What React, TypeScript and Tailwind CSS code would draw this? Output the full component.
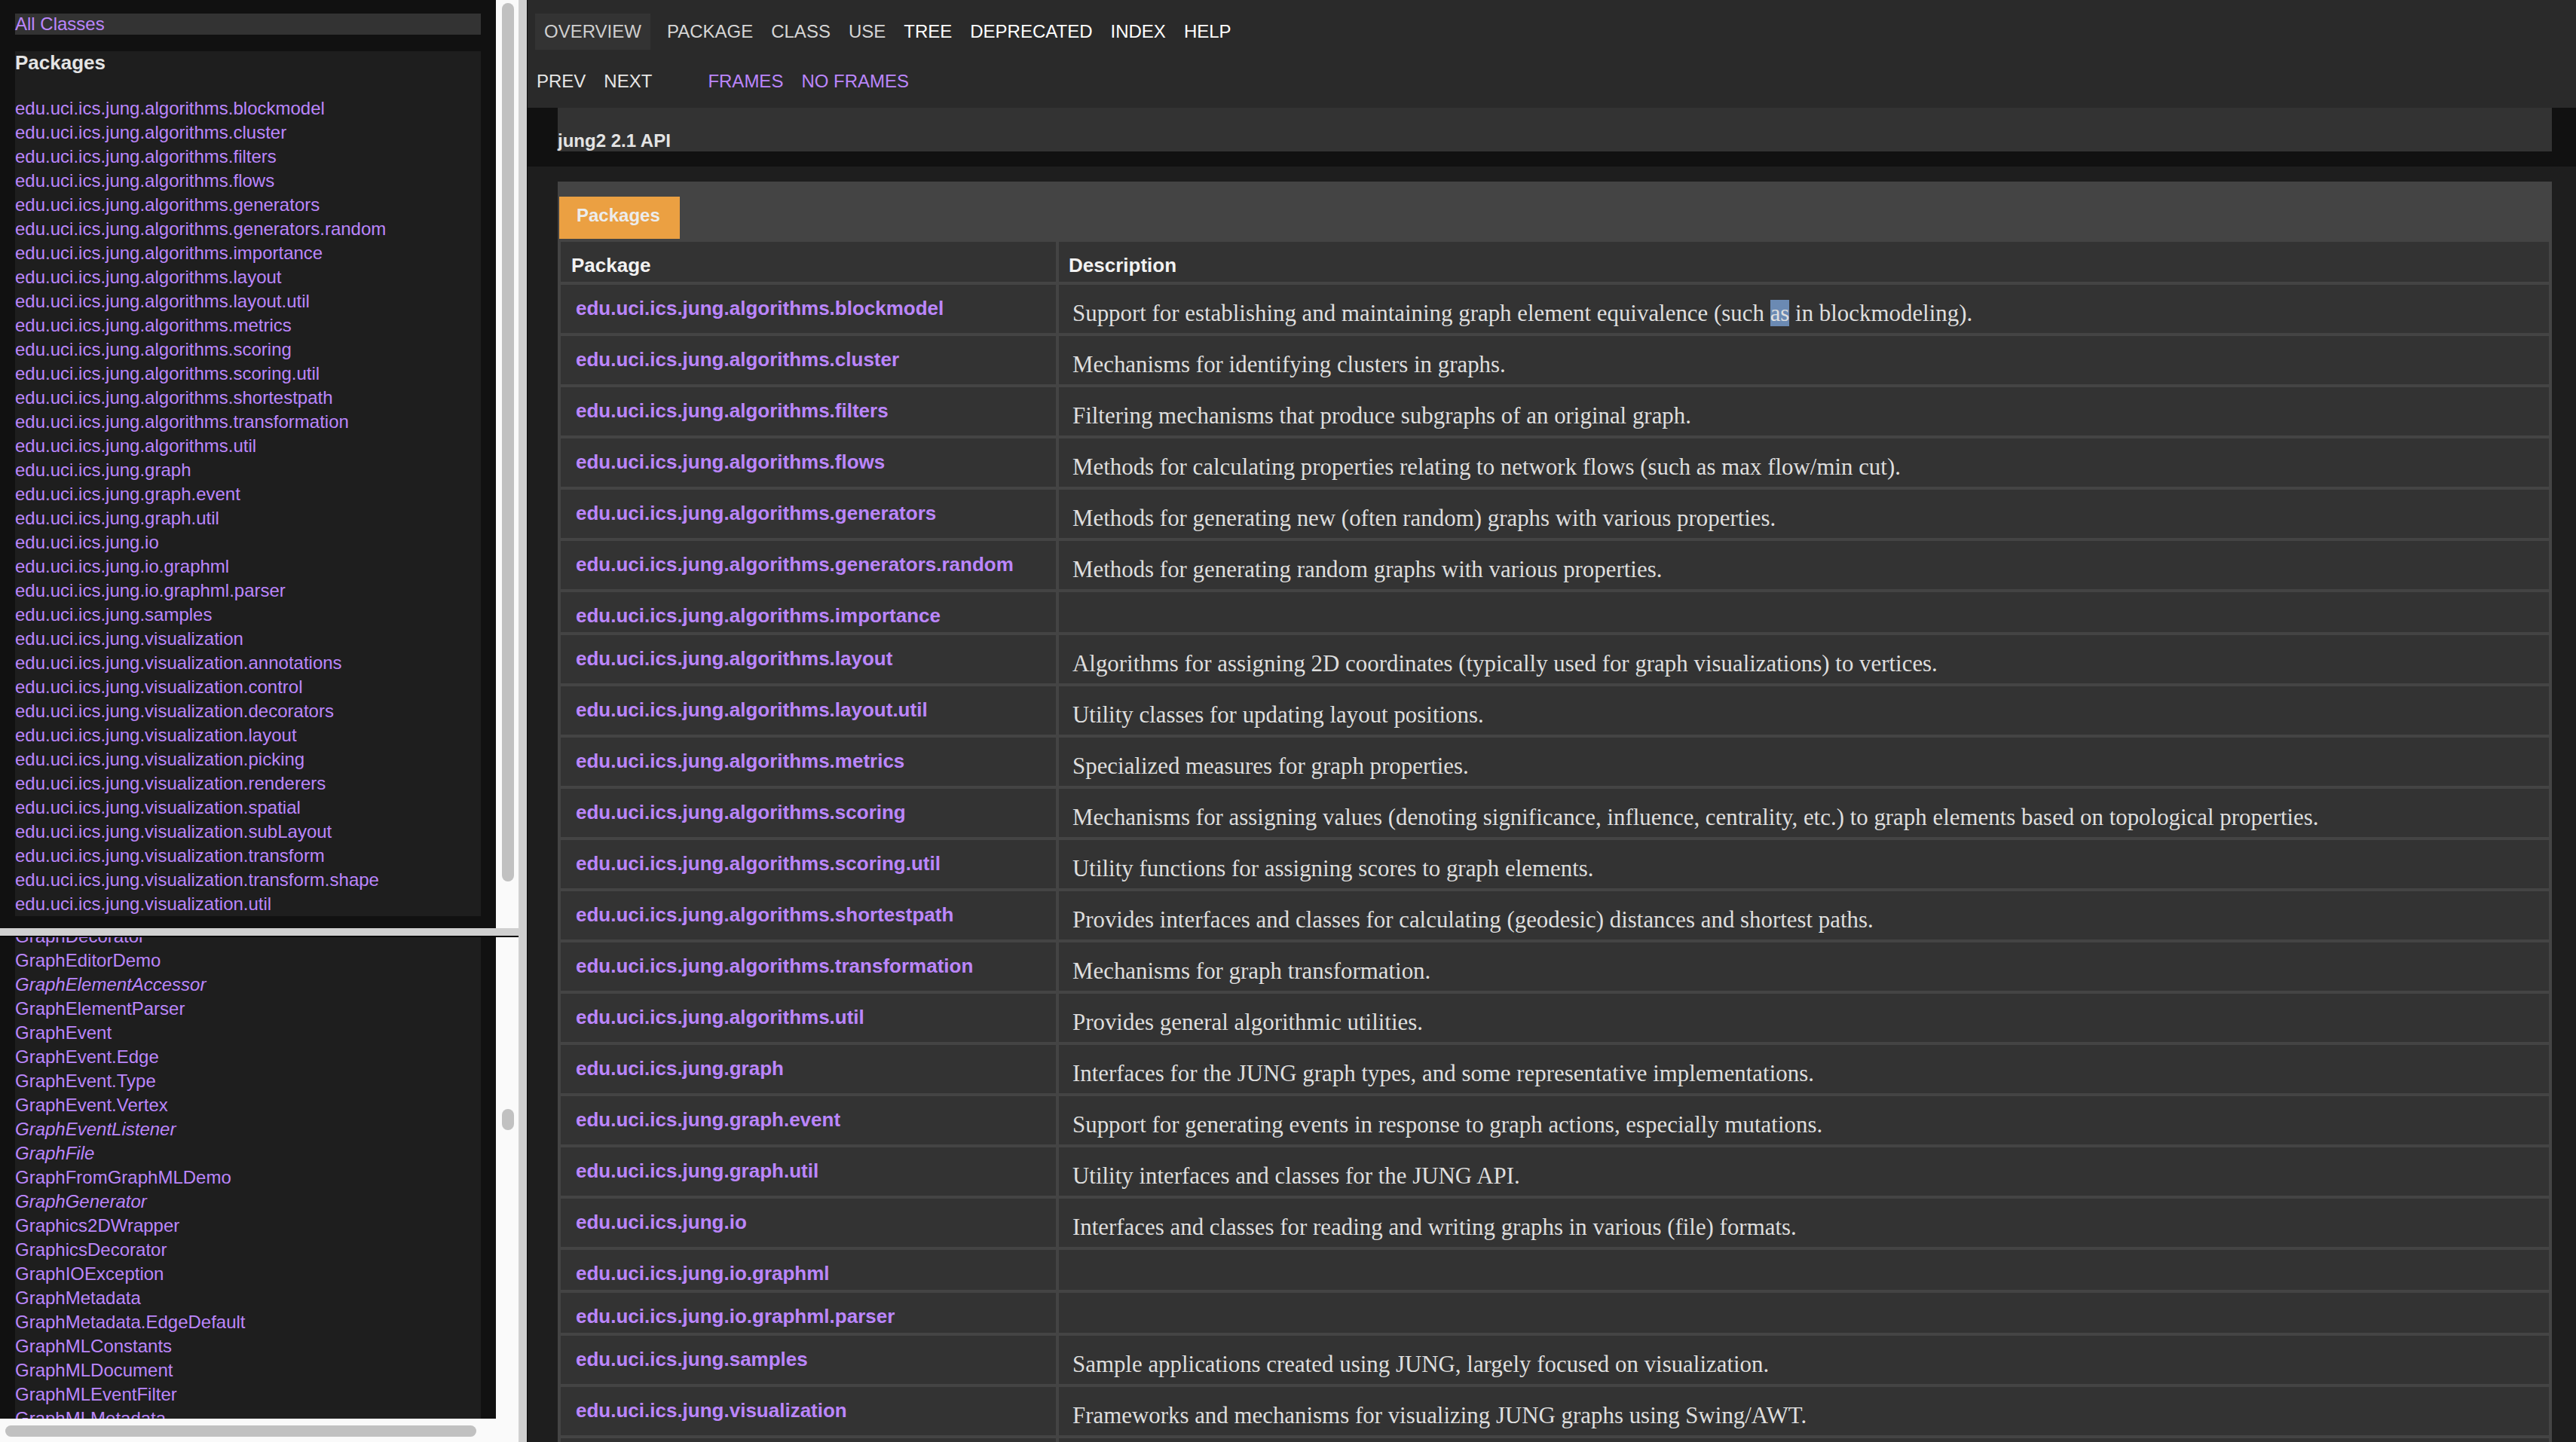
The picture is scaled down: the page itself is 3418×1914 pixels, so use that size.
import React from "react";

const packages = [
  "edu.uci.ics.jung.algorithms.blockmodel",
  "edu.uci.ics.jung.algorithms.cluster",
  "edu.uci.ics.jung.algorithms.filters",
  "edu.uci.ics.jung.algorithms.flows",
  "edu.uci.ics.jung.algorithms.generators",
  "edu.uci.ics.jung.algorithms.generators.random",
  "edu.uci.ics.jung.algorithms.importance",
  "edu.uci.ics.jung.algorithms.layout",
  "edu.uci.ics.jung.algorithms.layout.util",
  "edu.uci.ics.jung.algorithms.metrics",
  "edu.uci.ics.jung.algorithms.scoring",
  "edu.uci.ics.jung.algorithms.scoring.util",
  "edu.uci.ics.jung.algorithms.shortestpath",
  "edu.uci.ics.jung.algorithms.transformation",
  "edu.uci.ics.jung.algorithms.util",
  "edu.uci.ics.jung.graph",
  "edu.uci.ics.jung.graph.event",
  "edu.uci.ics.jung.graph.util",
  "edu.uci.ics.jung.io",
  "edu.uci.ics.jung.io.graphml",
  "edu.uci.ics.jung.io.graphml.parser",
  "edu.uci.ics.jung.samples",
  "edu.uci.ics.jung.visualization",
  "edu.uci.ics.jung.visualization.annotations",
  "edu.uci.ics.jung.visualization.control",
  "edu.uci.ics.jung.visualization.decorators",
  "edu.uci.ics.jung.visualization.layout",
  "edu.uci.ics.jung.visualization.picking",
  "edu.uci.ics.jung.visualization.renderers",
  "edu.uci.ics.jung.visualization.spatial",
  "edu.uci.ics.jung.visualization.subLayout",
  "edu.uci.ics.jung.visualization.transform",
  "edu.uci.ics.jung.visualization.transform.shape",
  "edu.uci.ics.jung.visualization.util",
];

// [name, isInterface]
const classes: [string, boolean][] = [
  ["GraphDecorator", false],
  ["GraphEditorDemo", false],
  ["GraphElementAccessor", true],
  ["GraphElementParser", false],
  ["GraphEvent", false],
  ["GraphEvent.Edge", false],
  ["GraphEvent.Type", false],
  ["GraphEvent.Vertex", false],
  ["GraphEventListener", true],
  ["GraphFile", true],
  ["GraphFromGraphMLDemo", false],
  ["GraphGenerator", true],
  ["Graphics2DWrapper", false],
  ["GraphicsDecorator", false],
  ["GraphIOException", false],
  ["GraphMetadata", false],
  ["GraphMetadata.EdgeDefault", false],
  ["GraphMLConstants", false],
  ["GraphMLDocument", false],
  ["GraphMLEventFilter", false],
  ["GraphMLMetadata", false],
];

const rows: { name: string; desc?: React.ReactNode }[] = [
  {
    name: "edu.uci.ics.jung.algorithms.blockmodel",
    desc: (
      <>
        Support for establishing and maintaining graph element equivalence (such{" "}
        <span className="bg-[#6b8ab3]">as</span> in blockmodeling).
      </>
    ),
  },
  { name: "edu.uci.ics.jung.algorithms.cluster", desc: "Mechanisms for identifying clusters in graphs." },
  { name: "edu.uci.ics.jung.algorithms.filters", desc: "Filtering mechanisms that produce subgraphs of an original graph." },
  { name: "edu.uci.ics.jung.algorithms.flows", desc: "Methods for calculating properties relating to network flows (such as max flow/min cut)." },
  { name: "edu.uci.ics.jung.algorithms.generators", desc: "Methods for generating new (often random) graphs with various properties." },
  { name: "edu.uci.ics.jung.algorithms.generators.random", desc: "Methods for generating random graphs with various properties." },
  { name: "edu.uci.ics.jung.algorithms.importance" },
  { name: "edu.uci.ics.jung.algorithms.layout", desc: "Algorithms for assigning 2D coordinates (typically used for graph visualizations) to vertices." },
  { name: "edu.uci.ics.jung.algorithms.layout.util", desc: "Utility classes for updating layout positions." },
  { name: "edu.uci.ics.jung.algorithms.metrics", desc: "Specialized measures for graph properties." },
  { name: "edu.uci.ics.jung.algorithms.scoring", desc: "Mechanisms for assigning values (denoting significance, influence, centrality, etc.) to graph elements based on topological properties." },
  { name: "edu.uci.ics.jung.algorithms.scoring.util", desc: "Utility functions for assigning scores to graph elements." },
  { name: "edu.uci.ics.jung.algorithms.shortestpath", desc: "Provides interfaces and classes for calculating (geodesic) distances and shortest paths." },
  { name: "edu.uci.ics.jung.algorithms.transformation", desc: "Mechanisms for graph transformation." },
  { name: "edu.uci.ics.jung.algorithms.util", desc: "Provides general algorithmic utilities." },
  { name: "edu.uci.ics.jung.graph", desc: "Interfaces for the JUNG graph types, and some representative implementations." },
  { name: "edu.uci.ics.jung.graph.event", desc: "Support for generating events in response to graph actions, especially mutations." },
  { name: "edu.uci.ics.jung.graph.util", desc: "Utility interfaces and classes for the JUNG API." },
  { name: "edu.uci.ics.jung.io", desc: "Interfaces and classes for reading and writing graphs in various (file) formats." },
  { name: "edu.uci.ics.jung.io.graphml" },
  { name: "edu.uci.ics.jung.io.graphml.parser" },
  { name: "edu.uci.ics.jung.samples", desc: "Sample applications created using JUNG, largely focused on visualization." },
  { name: "edu.uci.ics.jung.visualization", desc: "Frameworks and mechanisms for visualizing JUNG graphs using Swing/AWT." },
  { name: "edu.uci.ics.jung.visualization.annotations", desc: "Mechanisms to support the annotation of graph visualizations." },
];

const link = "text-[#bb86fc]";

export default function App() {
  return (
    <div className="flex h-[1914px] w-[3418px] overflow-hidden bg-[#1e1e1e] font-['Liberation_Sans',Arial,sans-serif]">
      {/* left frames */}
      <div className="flex w-[688px] shrink-0 flex-col">
        {/* package list frame */}
        <div className="flex h-[1232px] shrink-0">
          <div className="w-[658px] shrink-0 overflow-hidden bg-[#111111] px-[20px] pt-[18px]">
            <div className={`h-[28px] bg-[#333333] text-[24px] leading-[28px] ${link}`}>All Classes</div>
            <div className="mt-[22px] h-[1148px] bg-[#1e1e1e]">
              <h2 className="text-[26px] font-bold leading-[30px] text-[#e4e4e4]">Packages</h2>
              <ul className="mt-[30px]">
                {packages.map((p) => (
                  <li key={p} className={`h-[32px] whitespace-nowrap text-[24px] leading-[32px] ${link}`}>
                    {p}
                  </li>
                ))}
              </ul>
            </div>
          </div>
          <div className="w-[30px] shrink-0 bg-[#fafafa] pl-[8px] pt-[4px]">
            <div className="h-[1166px] w-[16px] rounded-full bg-[#c1c1c1]" />
          </div>
        </div>
        <div className="h-[10px] shrink-0 bg-[#d0d0d0]" />
        <div className="h-[2px] shrink-0 bg-[#0a0a0a]" />

        {/* class list frame */}
        <div className="flex min-h-0 flex-1 flex-col">
          <div className="flex min-h-0 flex-1">
            <div className="w-[658px] shrink-0 overflow-hidden bg-[#111111] px-[20px]">
              <div className="h-full overflow-hidden bg-[#1e1e1e]">
                <ul className="-mt-[17px]">
                  {classes.map(([c, italic]) => (
                    <li
                      key={c}
                      className={`h-[32px] whitespace-nowrap text-[24px] leading-[32px] ${link} ${italic ? "italic" : ""}`}
                    >
                      {c}
                    </li>
                  ))}
                </ul>
              </div>
            </div>
            <div className="w-[30px] shrink-0 bg-[#fafafa] pl-[8px] pt-[228px]">
              <div className="h-[28px] w-[16px] rounded-full bg-[#c1c1c1]" />
            </div>
          </div>
          <div className="h-[31px] shrink-0 bg-[#fafafa] pl-[7px] pt-[9px]">
            <div className="h-[15px] w-[625px] rounded-full bg-[#c1c1c1]" />
          </div>
        </div>
      </div>

      {/* frame border */}
      <div className="w-[11px] shrink-0 bg-[#d0d0d0]" />
      <div className="w-[1px] shrink-0 bg-[#0a0a0a]" />

      {/* main frame */}
      <div className="flex min-w-0 flex-1 flex-col overflow-hidden bg-[#1e1e1e]">
        <div className="h-[143px] shrink-0 bg-[#2a2a2a] text-[24px]">
          <ul className="flex pt-[18px]">
            <li className="mx-[10px] h-[48px] bg-[#333333] px-[12px] leading-[48px] text-[#cfcfcf]">OVERVIEW</li>
            <li className="px-[12px] leading-[48px] text-[#d6d6d6]">PACKAGE</li>
            <li className="px-[12px] leading-[48px] text-[#d6d6d6]">CLASS</li>
            <li className="px-[12px] leading-[48px] text-[#d6d6d6]">USE</li>
            <li className="px-[12px] leading-[48px] text-white">TREE</li>
            <li className="px-[12px] leading-[48px] text-white">DEPRECATED</li>
            <li className="px-[12px] leading-[48px] text-white">INDEX</li>
            <li className="px-[12px] leading-[48px] text-white">HELP</li>
          </ul>
          <div className="mt-[20px] flex h-[44px] leading-[44px]">
            <ul className="mr-[50px] flex text-[#e6e6e6]">
              <li className="px-[12px]">PREV</li>
              <li className="px-[12px]">NEXT</li>
            </ul>
            <ul className={`flex ${link}`}>
              <li className="px-[12px]">FRAMES</li>
              <li className="px-[12px]">NO FRAMES</li>
            </ul>
          </div>
        </div>

        <div className="shrink-0 bg-[#111111] pb-[20px] pl-[40px] pr-[32px]">
          <div className="h-[58px] bg-[#333333] pt-[30px] text-[24px] font-bold leading-[28px] text-[#e4e4e4]">
            jung2 2.1 API
          </div>
        </div>

        <div className="min-h-0 flex-1 pl-[40px] pr-[32px] pt-[20px]">
          <div className="bg-[#444444] px-[4px]">
            <div className="pt-[20px] pb-[4px]">
              <span className="-ml-[2px] inline-block h-[56px] bg-[#eba042] pl-[23px] pr-[26px] pt-[9px] text-[24px] font-bold leading-[32px] text-[#ececec]">
                Packages
              </span>
            </div>
            <div className="grid grid-cols-[657px_1fr] gap-[4px]">
              <div className="bg-[#333333] pl-[14px] pb-[6px] pt-[16px] text-[26px] font-bold leading-[31px] text-[#f2f2f2]">
                Package
              </div>
              <div className="bg-[#333333] pl-[13px] pb-[6px] pt-[16px] text-[26px] font-bold leading-[31px] text-[#f2f2f2]">
                Description
              </div>
              {rows.map((r) => (
                <React.Fragment key={r.name}>
                  <div className={`whitespace-nowrap bg-[#333333] pb-[6px] pl-[20px] pt-[16px] text-[26px] font-bold leading-[31px] ${link}`}>
                    {r.name}
                  </div>
                  <div className="bg-[#333333] pb-[6px] pl-[18px] pt-[16px]">
                    {r.desc && (
                      <div className="mb-[4px] mt-[6px] whitespace-nowrap font-['Liberation_Serif','Times_New_Roman',serif] text-[30.9px] leading-[32px] text-[#dedede]">
                        {r.desc}
                      </div>
                    )}
                  </div>
                </React.Fragment>
              ))}
            </div>
          </div>
        </div>
      </div>
    </div>
  );
}
